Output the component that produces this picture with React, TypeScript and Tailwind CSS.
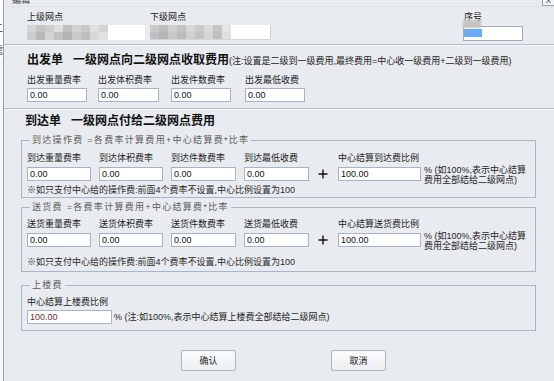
import React from 'react';

const FONT = "font-['Liberation_Sans','Noto_Sans_CJK_SC',sans-serif]";

type InputProps = { value: string; w: string; className?: string; tone?: string };

function Input({ value, w, className = '', tone = 'text-[#141414]' }: InputProps) {
  return (
    <div
      className={`h-[14px] shrink-0 bg-white border border-[#a9b4c0] pl-[2px] text-[9px] leading-[12px] ${tone} ${w} ${className}`}
    >
      {value}
    </div>
  );
}

type ColProps = { label: string; colW: string; inputW: string; gap?: string };

function Col({ label, colW, inputW, gap = 'mt-[3px]' }: ColProps) {
  return (
    <div className={`flex flex-col shrink-0 ${colW}`}>
      <div className="text-[9px] leading-[12px] text-[#1c1c1c] whitespace-nowrap">{label}</div>
      <Input value="0.00" w={inputW} className={gap} />
    </div>
  );
}

function Plus() {
  return (
    <svg width="10" height="10" viewBox="0 0 10 10" className="shrink-0 mb-[2px]">
      <path d="M5 0.5V9.5M0.5 5H9.5" stroke="#111" strokeWidth="1.4" />
    </svg>
  );
}

// blurred mosaic used where the names were hidden
function Mosaic({ top, bottom, w }: { top: string[]; bottom: string[]; w: string }) {
  return (
    <div className={`flex flex-col shrink-0 blur-[0.7px] ${w}`}>
      <div className="flex h-[7px]">
        {top.map((c, i) => (
          <div key={i} className="w-[9px] h-full" style={{ backgroundColor: c }} />
        ))}
      </div>
      <div className="flex h-[8px]">
        {bottom.map((c, i) => (
          <div key={i} className="w-[9px] h-full" style={{ backgroundColor: c }} />
        ))}
      </div>
    </div>
  );
}

function Separator() {
  return <div className="h-[2px] shrink-0 border-t border-[#b4bec9] bg-[#f6f7f9]" />;
}

function SideNote() {
  return (
    <div className="ml-[3px] h-[14px] -mt-[2px] text-[9px] leading-[10px] text-[#262626] whitespace-nowrap">
      % (如100%,表示中心结算
      <br />
      费用全部结给二级网点)
    </div>
  );
}

export default function App() {
  return (
    <div className={`w-[554px] h-[381px] flex overflow-hidden bg-[#e8ebef] ${FONT}`}>
      {/* window behind the dialog */}
      <div className="w-[3px] shrink-0 flex flex-col overflow-hidden bg-[#f6f7f8]">
        <div className="h-[58px] bg-white text-[10px] leading-[10px] text-[#333]">
          <div className="-ml-[7px] mt-[24px]">二</div>
          <div className="-ml-[7px] mt-[12px]">滤</div>
        </div>
      </div>
      <div className="w-px shrink-0 bg-[#98a2ae]" />

      <div className="flex-1 flex flex-col">
        {/* title bar */}
        <div className="h-[7px] shrink-0 flex overflow-hidden border-b border-[#dde1e6]">
          <div className="ml-[8px] -mt-[5px] text-[9px] leading-[10px] text-[#444]">编辑</div>
          <div className="ml-auto w-[12px] h-[6px] border-l border-b border-[#9da6b0] bg-[#f1f3f5] overflow-hidden text-[8px] leading-[8px] text-center text-[#333]">
            <div className="-mt-[3px]">X</div>
          </div>
        </div>

        {/* top info */}
        <div className="flex pl-[23px] mt-[4px]">
          <div className="w-[123px] shrink-0">
            <div className="text-[9px] leading-[12px] text-[#222]">上级网点</div>
            <div className="mt-[2px] w-[118px] h-[15px] flex bg-white overflow-hidden">
              <Mosaic
                w="w-[83px]"
                top={['#d6d6d6', '#c4c4c4', '#cdcdcd', '#dedede', '#bfbfbf', '#d2d2d2', '#c8c8c8', '#e0e0e0', '#d4d4d4']}
                bottom={['#cdcdcd', '#b8b8b8', '#d4d4d4', '#c1c1c1', '#b3b3b3', '#cacaca', '#bdbdbd', '#d8d8d8', '#e2e2e2']}
              />
            </div>
          </div>
          <div className="w-[313px] shrink-0">
            <div className="text-[9px] leading-[12px] text-[#222]">下级网点</div>
            <div className="mt-[2px] w-[121px] h-[15px] flex bg-white overflow-hidden border-r border-b border-[#cfd5dc]">
              <Mosaic
                w="w-[84px]"
                top={['#cacaca', '#bdbdbd', '#cfcfcf', '#c2c2c2', '#d7d7d7', '#cbcbcb', '#dcdcdc', '#c5c5c5', '#e4e4e4']}
                bottom={['#bebebe', '#b4b4b4', '#c9c9c9', '#bcbcbc', '#d1d1d1', '#c3c3c3', '#d5d5d5', '#bfbfbf', '#e0e0e0']}
              />
            </div>
          </div>
          <div className="relative w-[60px] shrink-0">
            <div className="text-[9px] leading-[12px] text-[#222] pl-[1px]">序号</div>
            <div className="mt-[3px] w-[60px] h-[15px] bg-white border border-[#a4adb7] pt-[2px]">
              <div className="w-[18px] h-[8px] bg-[#6caaf2] blur-[0.4px]" />
            </div>
            <div className="absolute left-0 top-[9px] w-[18px] h-[8px] bg-[#c4c4c4] blur-[0.8px]" />
          </div>
        </div>

        <div className="mt-[3px]">
          <Separator />
        </div>

        {/* 出发单 */}
        <div className="pl-[23px]">
          <div className="mt-[7px] flex items-baseline whitespace-nowrap">
            <span className="text-[12px] leading-[14px] font-bold text-[#111]">出发单</span>
            <span className="ml-[10px] text-[12px] leading-[14px] font-bold text-[#111]">一级网点向二级网点收取费用</span>
            <span className="text-[9px] leading-[12px] text-[#222]">(注:设置是二级到一级费用,最终费用=中心收一级费用+二级到一级费用)</span>
          </div>
          <div className="mt-[7px] flex">
            <Col label="出发重量费率" colW="w-[71px]" inputW="w-[60px]" gap="mt-[2px]" />
            <Col label="出发体积费率" colW="w-[73px]" inputW="w-[61px]" gap="mt-[2px]" />
            <Col label="出发件数费率" colW="w-[74px]" inputW="w-[60px]" gap="mt-[2px]" />
            <Col label="出发最低收费" colW="w-[74px]" inputW="w-[60px]" gap="mt-[2px]" />
          </div>
        </div>

        <div className="mt-[6px]">
          <Separator />
        </div>

        {/* 到达单 */}
        <div className="pl-[21px] mt-[4px] flex whitespace-nowrap text-[12px] leading-[14px] font-bold text-[#111]">
          <span>到达单</span>
          <span className="ml-[10px]">一级网点付给二级网点费用</span>
        </div>

        <fieldset className="ml-[17px] mt-[6px] w-[515px] shrink-0 border border-[#a9b6c5] pl-[5px] pb-[1px]">
          <legend className="ml-[3px] px-[2px] text-[9px] leading-[12px] tracking-[1.3px] text-[#5c5c5c]">
            到达操作费 =各费率计算费用+中心结算费*比率
          </legend>
          <div className="mt-[6px] flex items-end">
            <Col label="到达重量费率" colW="w-[72px]" inputW="w-[64px]" />
            <Col label="到达体积费率" colW="w-[72px]" inputW="w-[64px]" />
            <Col label="到达件数费率" colW="w-[73px]" inputW="w-[65px]" />
            <Col label="到达最低收费" colW="w-[74px]" inputW="w-[65px]" />
            <Plus />
            <div className="ml-[10px] flex flex-col shrink-0">
              <div className="text-[9px] leading-[12px] text-[#1c1c1c] whitespace-nowrap">中心结算到达费比例</div>
              <div className="mt-[3px] flex">
                <Input value="100.00" w="w-[83px]" />
                <SideNote />
              </div>
            </div>
          </div>
          <div className="mt-[3px] text-[9px] leading-[12px] text-[#2a2a2a] whitespace-nowrap">
            ※如只支付中心给的操作费:前面4个费率不设置,中心比例设置为100
          </div>
        </fieldset>

        <fieldset className="ml-[17px] mt-[3px] w-[515px] shrink-0 border border-[#a9b6c5] pl-[5px] pb-[3px]">
          <legend className="ml-[3px] px-[2px] text-[9px] leading-[12px] tracking-[1.3px] text-[#5c5c5c]">
            送货费 =各费率计算费用+中心结算费*比率
          </legend>
          <div className="mt-[5px] flex items-end">
            <Col label="送货重量费率" colW="w-[72px]" inputW="w-[64px]" />
            <Col label="送货体积费率" colW="w-[72px]" inputW="w-[64px]" />
            <Col label="送货件数费率" colW="w-[73px]" inputW="w-[65px]" />
            <Col label="送货最低收费" colW="w-[74px]" inputW="w-[65px]" />
            <Plus />
            <div className="ml-[10px] flex flex-col shrink-0">
              <div className="text-[9px] leading-[12px] text-[#1c1c1c] whitespace-nowrap">中心结算送货费比例</div>
              <div className="mt-[3px] flex">
                <Input value="100.00" w="w-[83px]" />
                <SideNote />
              </div>
            </div>
          </div>
          <div className="mt-[9px] text-[9px] leading-[12px] text-[#2a2a2a] whitespace-nowrap">
            ※如只支付中心给的操作费:前面4个费率不设置,中心比例设置为100
          </div>
        </fieldset>

        <fieldset className="ml-[17px] mt-[7px] w-[515px] shrink-0 border border-[#a9b6c5] pl-[5px] pb-[6px]">
          <legend className="ml-[3px] px-[2px] text-[9px] leading-[12px] tracking-[1.3px] text-[#5c5c5c]">
            上楼费
          </legend>
          <div className="mt-[5px] text-[9px] leading-[12px] text-[#1c1c1c] whitespace-nowrap">中心结算上楼费比例</div>
          <div className="mt-[2px] flex items-center">
            <Input value="100.00" w="w-[85px]" tone="text-[#6e2f2f]" />
            <div className="ml-[2px] text-[9px] leading-[12px] text-[#262626] whitespace-nowrap">
              % (注:如100%,表示中心结算上楼费全部结给二级网点)
            </div>
          </div>
        </fieldset>

        <div className="mt-[19px] flex">
          <button className="ml-[177px] w-[55px] h-[21px] rounded-[2px] border border-[#adb5bf] bg-gradient-to-b from-[#fbfcfd] to-[#eceef1] text-[9px] leading-[12px] text-[#222]">
            确认
          </button>
          <button className="ml-[95px] w-[55px] h-[21px] rounded-[2px] border border-[#adb5bf] bg-gradient-to-b from-[#fbfcfd] to-[#eceef1] text-[9px] leading-[12px] text-[#222]">
            取消
          </button>
        </div>
      </div>
    </div>
  );
}
